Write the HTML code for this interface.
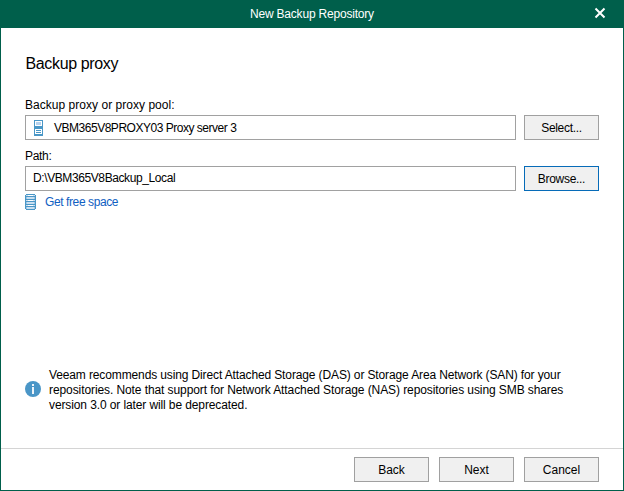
<!DOCTYPE html>
<html>
<head>
<meta charset="utf-8">
<style>
html,body{margin:0;padding:0;}
body{width:624px;height:491px;position:relative;overflow:hidden;background:#fff;font-family:"Liberation Sans",sans-serif;color:#000;}
.a{position:absolute;white-space:pre;line-height:14px;font-size:12px;}
#win{position:absolute;left:0;top:0;width:622px;height:490px;border:1px solid #005f4b;border-top:none;}
#title{position:absolute;left:0;top:0;width:624px;height:28px;background:#005f4b;}
.box{position:absolute;box-sizing:border-box;border:1px solid #a1a1a1;background:#fff;}
.btn{position:absolute;box-sizing:border-box;border:1px solid #a0a0a0;background:#f0f0f0;text-align:center;font-size:12px;line-height:24px;}
</style>
</head>
<body>
<div id="win"></div>
<div id="title"></div>
<div class="a" style="left:250px;top:7px;color:#fff;letter-spacing:-0.2px;">New Backup Repository</div>
<svg style="position:absolute;left:594px;top:7px" width="12" height="12" viewBox="0 0 12 12"><path d="M1.5 1.5L10.5 10.5M10.5 1.5L1.5 10.5" stroke="#fff" stroke-width="2" fill="none"/></svg>

<div class="a" style="left:25.5px;top:54px;font-size:16px;line-height:19px;letter-spacing:-0.36px;">Backup proxy</div>

<div class="a" style="left:25px;top:98px;letter-spacing:0.03px;">Backup proxy or proxy pool:</div>
<div class="box" style="left:25px;top:115px;width:491px;height:25px;"></div>
<svg style="position:absolute;left:34px;top:120px" width="9" height="16" viewBox="0 0 9 16" shape-rendering="crispEdges">
<rect x="0" y="0" width="9" height="16" fill="#4a97c7"/>
<rect x="1" y="1" width="7" height="5" fill="#fff"/>
<rect x="2" y="2" width="5" height="3" fill="#b5d2ee"/>
<rect x="1" y="9" width="7" height="5" fill="#fff"/>
<rect x="2" y="10" width="5" height="1" fill="#4a97c7"/>
<rect x="2" y="12" width="5" height="1" fill="#4a97c7"/>
</svg>
<div class="a" style="left:54px;top:121px;letter-spacing:-0.48px;">VBM365V8PROXY03 Proxy server 3</div>
<div class="btn" style="left:524px;top:115px;width:75px;height:25px;letter-spacing:-0.3px;">Select...</div>

<div class="a" style="left:25px;top:149px;letter-spacing:-0.3px;">Path:</div>
<div class="box" style="left:25px;top:166px;width:491px;height:25px;"></div>
<div class="a" style="left:33px;top:171px;letter-spacing:-0.4px;">D:\VBM365V8Backup_Local</div>
<div class="btn" style="left:524px;top:166px;width:75px;height:25px;border-color:#066bb8;letter-spacing:-0.3px;">Browse...</div>

<svg style="position:absolute;left:25px;top:194px" width="11" height="16" viewBox="0 0 11 16" shape-rendering="crispEdges"><rect x="0" y="1" width="1" height="14" fill="#4a97c7"/><rect x="10" y="1" width="1" height="14" fill="#4a97c7"/><rect x="1" y="0" width="9" height="1" fill="#4a97c7"/><rect x="1" y="1" width="9" height="1" fill="#c9def0"/><rect x="3" y="1" width="5" height="1" fill="#fff"/><rect x="1" y="2" width="9" height="1" fill="#4a97c7"/><rect x="1" y="3" width="9" height="1" fill="#c9def0"/><rect x="1" y="3" width="1" height="1" fill="#9cc5e3"/><rect x="9" y="3" width="1" height="1" fill="#9cc5e3"/><rect x="1" y="4" width="9" height="1" fill="#c9def0"/><rect x="1" y="4" width="1" height="1" fill="#9cc5e3"/><rect x="9" y="4" width="1" height="1" fill="#9cc5e3"/><rect x="1" y="5" width="9" height="1" fill="#4a97c7"/><rect x="1" y="6" width="9" height="1" fill="#c9def0"/><rect x="3" y="6" width="5" height="1" fill="#fff"/><rect x="1" y="7" width="9" height="1" fill="#4a97c7"/><rect x="1" y="8" width="9" height="1" fill="#c9def0"/><rect x="1" y="8" width="1" height="1" fill="#9cc5e3"/><rect x="9" y="8" width="1" height="1" fill="#9cc5e3"/><rect x="1" y="9" width="9" height="1" fill="#c9def0"/><rect x="1" y="9" width="1" height="1" fill="#9cc5e3"/><rect x="9" y="9" width="1" height="1" fill="#9cc5e3"/><rect x="1" y="10" width="9" height="1" fill="#4a97c7"/><rect x="1" y="11" width="9" height="1" fill="#c9def0"/><rect x="3" y="11" width="5" height="1" fill="#fff"/><rect x="1" y="12" width="9" height="1" fill="#4a97c7"/><rect x="1" y="13" width="9" height="1" fill="#c9def0"/><rect x="1" y="13" width="1" height="1" fill="#9cc5e3"/><rect x="9" y="13" width="1" height="1" fill="#9cc5e3"/><rect x="1" y="14" width="9" height="1" fill="#c9def0"/><rect x="1" y="14" width="1" height="1" fill="#9cc5e3"/><rect x="9" y="14" width="1" height="1" fill="#9cc5e3"/><rect x="1" y="15" width="9" height="1" fill="#4a97c7"/></svg>
<div class="a" style="left:45px;top:195px;color:#1060c2;letter-spacing:-0.4px;">Get free space</div>

<svg style="position:absolute;left:25px;top:381px" width="16" height="16" viewBox="0 0 16 16">
<circle cx="8" cy="8" r="8" fill="#4a96c7"/>
<rect x="7" y="3" width="2" height="2" fill="#eef4fa"/>
<rect x="7" y="6" width="2" height="7" fill="#eef4fa"/>
</svg>
<div class="a" style="left:49px;top:368px;letter-spacing:-0.125px;">Veeam recommends using Direct Attached Storage (DAS) or Storage Area Network (SAN) for your</div>
<div class="a" style="left:49px;top:383px;letter-spacing:-0.09px;">repositories. Note that support for Network Attached Storage (NAS) repositories using SMB shares</div>
<div class="a" style="left:49px;top:398px;letter-spacing:-0.11px;">version 3.0 or later will be deprecated.</div>

<div style="position:absolute;left:1px;top:448px;width:622px;height:1px;background:#d4d4d4;"></div>
<div class="btn" style="left:354px;top:457px;width:75px;height:25px;">Back</div>
<div class="btn" style="left:439px;top:457px;width:75px;height:25px;">Next</div>
<div class="btn" style="left:524px;top:457px;width:75px;height:25px;">Cancel</div>
</body>
</html>
